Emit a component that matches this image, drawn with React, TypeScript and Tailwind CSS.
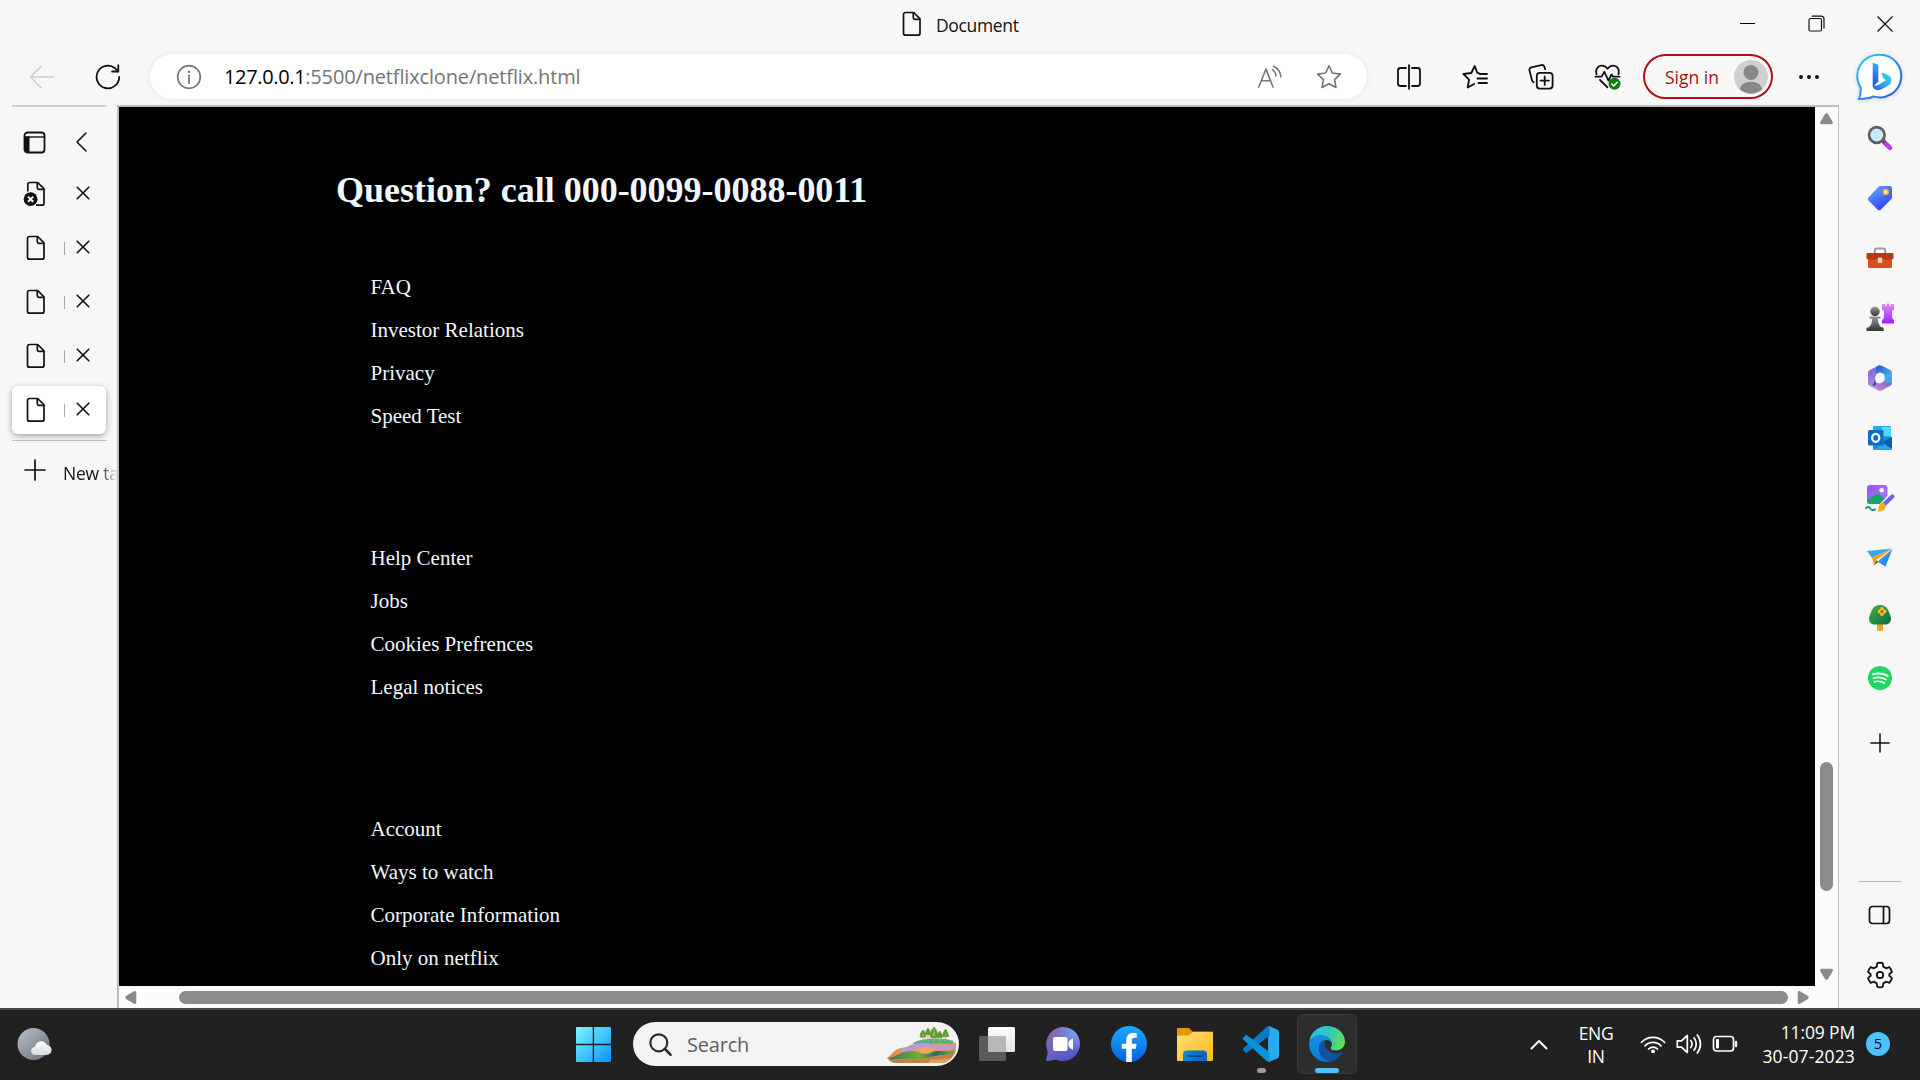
import React from "react";

type IconProps = { className?: string };

/* ---------- line icons ---------- */

const DocIcon = ({ className = "" }: IconProps) => (
  <svg className={className} width="20" height="26" viewBox="0 0 20 26" fill="none" stroke="#111" strokeWidth="1.7" strokeLinejoin="round">
    <path d="M3.5 1.5h8.2l6.3 6.3v14.4a2 2 0 0 1-2 2H3.5a2 2 0 0 1-2-2V3.500a2 2 0 0 1 2-2z" />
    <path d="M11.300 1.500v5.200a1.600 1.600 0 0 0 1.600 1.600h5.100" />
  </svg>
);

const DocErrorIcon = () => (
  <svg width="24" height="26" viewBox="0 0 24 26" fill="none" stroke="#111" strokeWidth="1.700" strokeLinejoin="round">
    <path d="M4.800 10.500V3.500a2 2 0 0 1 2-2h7.900l6.300 6.300v14.400a2 2 0 0 1-2 2h-6" />
    <path d="M14.300 1.500v5.200a1.600 1.600 0 0 0 1.600 1.600H21" />
    <circle cx="7.600" cy="18.200" r="6.900" fill="#111" stroke="none" />
    <path d="M5 15.600l5.200 5.200M10.200 15.600L5 20.800" stroke="#f7f7f7" strokeWidth="2" />
  </svg>
);

const CloseIcon = () => (
  <svg className="mb-[2px]" width="14" height="14" viewBox="0 0 14 14" stroke="#111" strokeWidth="1.600" strokeLinecap="round">
    <path d="M1.200 1.200l11.600 11.600M12.800 1.200L1.200 12.800" />
  </svg>
);

const BackIcon = () => (
  <svg width="26" height="24" viewBox="0 0 26 24" fill="none" stroke="#cdcdcd" strokeWidth="1.600" strokeLinecap="round" strokeLinejoin="round">
    <path d="M12 1.500L1.500 12 12 22.500M1.500 12H25" />
  </svg>
);

const RefreshIcon = () => (
  <svg width="26" height="26" viewBox="0 0 26 26" fill="none" stroke="#111" strokeWidth="1.800" strokeLinecap="round" strokeLinejoin="round">
    <path d="M24.200 13a11.300 11.300 0 1 1-4.200-8.800l3 2.900" />
    <path d="M23.300 1.200v6.300h-6.200" />
  </svg>
);

const InfoIcon = () => (
  <svg width="26" height="26" viewBox="0 0 26 26" fill="none" stroke="#757575" strokeWidth="1.700">
    <circle cx="13" cy="13" r="11.300" />
    <path d="M13 11.200v8" strokeLinecap="round" />
    <circle cx="13" cy="7.800" r="1.200" fill="#757575" stroke="none" />
  </svg>
);

const ReadAloudIcon = () => (
  <svg width="26" height="24" viewBox="0 0 26 24" fill="none" stroke="#757575" strokeWidth="1.600" strokeLinecap="round" strokeLinejoin="round">
    <path d="M1.800 22L9 4l7 18M4.300 15.800h9.400" />
    <path d="M15.500 4.500c2 1.600 3.200 3.800 3.400 6.500M16.500 1.300c4.300 2 7 5.600 7.300 10.500" />
  </svg>
);

const StarIcon = () => (
  <svg width="26" height="26" viewBox="0 0 26 26" fill="none" stroke="#757575" strokeWidth="1.600" strokeLinejoin="round">
    <path d="M13 1.800l3.400 7.200 7.900 1.100-5.700 5.500 1.400 7.900-7-3.800-7 3.800 1.400-7.900-5.700-5.500 7.900-1.100z" />
  </svg>
);

const SplitIcon = () => (
  <svg width="26" height="26" viewBox="0 0 26 26" fill="none" stroke="#111" strokeWidth="1.800" strokeLinecap="round">
    <path d="M10 4H4.500A2.500 2.500 0 0 0 2 6.500v13A2.500 2.500 0 0 0 4.500 22H10M16 4h5.500A2.500 2.500 0 0 1 24 6.500v13a2.500 2.500 0 0 1-2.500 2.500H16M13 1.200v23.600" />
  </svg>
);

const FavoritesIcon = () => (
  <svg width="26" height="26" viewBox="0 0 26 26" fill="none" stroke="#111" strokeWidth="1.800" strokeLinecap="round" strokeLinejoin="round">
    <path d="M17 9.200l-1.700-.3L12.700 2l-3.400 7L1.400 10l5.700 5.600-1.400 7.900 6.500-3.500" />
    <path d="M17.500 10H25M15.500 14.500H25M16.500 19H25" />
  </svg>
);

const CollectionsIcon = () => (
  <svg width="26" height="26" viewBox="0 0 26 26" fill="none" stroke="#111" strokeWidth="1.800" strokeLinecap="round" strokeLinejoin="round">
    <rect x="8.800" y="8.800" width="15.800" height="15.800" rx="3" />
    <path d="M16.700 12.500v8.400M12.500 16.700h8.400" />
    <path d="M5.600 18.300a3 3 0 0 1-1.600-2L1.500 6.500A2.600 2.600 0 0 1 3.400 3.300l10-2.200a2.600 2.600 0 0 1 3.100 1.900l.6 2.200" />
  </svg>
);

const EssentialsIcon = () => (
  <svg width="28" height="28" viewBox="0 0 28 28" fill="none" stroke="#111" strokeWidth="1.800" strokeLinecap="round" strokeLinejoin="round">
    <path d="M2.500 11.200C1.200 7 3.300 3 7.200 2.600c2.700-.3 4.900 1 6.300 3.300 1.400-2.300 3.600-3.600 6.300-3.300 3.900.4 6 4.400 4.700 8.600" />
    <path d="M1.500 13.700h6.200l2.600-4.900 4.200 8.800 3.100-6.200 1.400 2.300h6.500" />
    <path d="M6 17l7.500 7.400" />
    <circle cx="20.500" cy="20.800" r="6" fill="#107c10" stroke="none" />
    <path d="M17.800 21l1.900 1.900 3.500-3.700" stroke="#fff" strokeWidth="1.500" />
  </svg>
);

/* ---------- colour icons ---------- */

const BingIcon = () => (
  <svg width="48" height="50" viewBox="0 0 48 50" className="drop-shadow-sm">
    <defs>
      <linearGradient id="bingRing" x1="0" y1="0" x2="1" y2="1">
        <stop offset="0" stopColor="#20d5f5" />
        <stop offset=".5" stopColor="#2f8df5" />
        <stop offset="1" stopColor="#1d54dc" />
      </linearGradient>
      <linearGradient id="bingStem" x1="0" y1="0" x2="0" y2="1">
        <stop offset="0" stopColor="#34a9ff" />
        <stop offset="1" stopColor="#1c4be4" />
      </linearGradient>
      <linearGradient id="bingBowl" x1="1" y1="0" x2="0" y2="1">
        <stop offset="0" stopColor="#2fe0d2" />
        <stop offset=".5" stopColor="#3aa8f5" />
        <stop offset="1" stopColor="#2358e8" />
      </linearGradient>
    </defs>
    <path d="M24 2.800a21.300 21.300 0 1 1-6.500 41.600c-3 1.700-8 2.600-14.700 2.600 1.900-3.600 2.100-7 1.900-11.300A21.300 21.300 0 0 1 24 2.800z" fill="#fff" stroke="url(#bingRing)" strokeWidth="2" strokeLinejoin="round" />
    <path d="M16.700 10.800l5.600 2v16.500l-5.600 6z" fill="url(#bingStem)" />
    <path d="M16.700 34.300c1 4.200 6 4.800 10 2.500l6-3.600c3.400-2.200 4-7.400.2-9.800-1.800-1-4.300-2-6-2.500-1.200-.3-1.500.6-1.100 1.500l1.900 4.300 2.500 1.300-7.900 5z" fill="url(#bingBowl)" />
  </svg>
);

const SearchColor = () => (
  <svg className="mb-[1px]" width="28" height="28" viewBox="0 0 28 28">
    <path d="M17.500 17.500l6.500 6.300" stroke="#b63df0" strokeWidth="4.600" strokeLinecap="round" />
    <path d="M16 16l3 3" stroke="#555" strokeWidth="3" />
    <circle cx="10.800" cy="11" r="7.800" fill="#c7e8fc" stroke="#5f5f5f" strokeWidth="2.700" />
  </svg>
);

const TagColor = () => (
  <svg width="26" height="26" viewBox="0 0 26 26">
    <defs>
      <linearGradient id="tag" x1="0" y1="0" x2=".7" y2="1">
        <stop offset="0" stopColor="#6aaeff" />
        <stop offset="1" stopColor="#2b3ff0" />
      </linearGradient>
    </defs>
    <path d="M13.500 1H23a2 2 0 0 1 2 2v9.200a3 3 0 0 1-.9 2.100L14 24.400a2.500 2.500 0 0 1-3.500 0L1.700 15.700a2.500 2.500 0 0 1 0-3.500L11.400 1.900A3 3 0 0 1 13.500 1z" fill="url(#tag)" />
    <circle cx="18.800" cy="7" r="2.300" fill="#fff" stroke="#f9bd12" strokeWidth="1.800" />
  </svg>
);

const ToolboxColor = () => (
  <svg width="28" height="22" viewBox="0 0 28 22">
    <path d="M8.800 7V3.500a2 2 0 0 1 2-2h6.400a2 2 0 0 1 2 2V7" fill="none" stroke="#9a9a9a" strokeWidth="2" />
    <path d="M2 11h24v8.500a1.500 1.500 0 0 1-1.500 1.500h-21A1.500 1.500 0 0 1 2 19.500z" fill="#dc4f1d" />
    <path d="M1.500 6h25a1 1 0 0 1 1 1v4.500L26 12.500H2L.5 11.500V7a1 1 0 0 1 1-1z" fill="#b9390c" />
    <rect x="11.700" y="10.500" width="4.600" height="5.500" rx="1.200" fill="#d3d3d3" />
  </svg>
);

const ChessColor = () => (
  <svg width="28" height="30" viewBox="0 0 28 30">
    <defs>
      <linearGradient id="pawn" x1="0" y1="0" x2="0" y2="1">
        <stop offset="0" stopColor="#9a9a9a" />
        <stop offset="1" stopColor="#333" />
      </linearGradient>
      <linearGradient id="rook" x1="0" y1="0" x2="0" y2="1">
        <stop offset="0" stopColor="#e08bfa" />
        <stop offset="1" stopColor="#a020f8" />
      </linearGradient>
    </defs>
    <path d="M16 1h2.800v1.800h1.900V.5h2.600v2.300h1.900V1H28v5.500l-2.200 1.700.5 7 1.700 2V20.500H16v-3.300l1.700-2 .5-7L16 6.500z" fill="url(#rook)" />
    <circle cx="9" cy="8.500" r="4.700" fill="url(#pawn)" />
    <path d="M3.500 13.500h11v2.300h-2.700c.3 4 1.200 6.200 3.200 8.500h1.200a1.500 1.500 0 0 1 1.500 1.500V28H.5v-2.200A1.500 1.500 0 0 1 2 24.300h1c2-2.300 3-4.500 3.200-8.500H3.500z" fill="url(#pawn)" />
  </svg>
);

const M365Color = () => (
  <svg width="26" height="28" viewBox="0 0 26 28">
    <defs>
      <linearGradient id="mA" x1="0" y1="0" x2="0" y2="1">
        <stop offset="0" stopColor="#6f6bd8" />
        <stop offset="1" stopColor="#b381e6" />
      </linearGradient>
      <linearGradient id="mB" x1="0" y1="0" x2="1" y2=".8">
        <stop offset="0" stopColor="#2f55c4" />
        <stop offset="1" stopColor="#48c5f3" />
      </linearGradient>
      <linearGradient id="mC" x1="0" y1="1" x2="1" y2="0">
        <stop offset="0" stopColor="#cf9cf0" />
        <stop offset="1" stopColor="#7a4ba6" />
      </linearGradient>
    </defs>
    <path d="M12.500 1L2.800 6A3 3 0 0 0 1 8.700v10.500a3 3 0 0 0 1.500 2.500l6 .2.500-11.600 4-2.400z" fill="url(#mA)" />
    <path d="M9 10.300V4.500a4 4 0 0 1 5.300-3L23.300 6A3 3 0 0 1 25 8.700v10L17.500 17v-6.200L13 8.200z" fill="url(#mB)" />
    <path d="M2.500 21.700c3 .4 5.200-.5 7-3.200l3.500 1 4.500-2.700V11.500L25 18.500c0 1.500-.5 2.600-1.700 3.300l-8.700 4.700a3.500 3.500 0 0 1-3.200 0z" fill="url(#mC)" />
    <path d="M17.500 12v5l7.500 2.500V13z" fill="#3da9e8" />
    <path d="M9 17.500l-.5 3.500-3 1.200 2-4.700z" fill="#2b4a9a" />
    <circle cx="13" cy="13.900" r="4.800" fill="#f7f7f7" />
  </svg>
);

const OutlookColor = () => (
  <svg width="26" height="26" viewBox="0 0 26 26">
    <rect x="6" y="1" width="18" height="12" rx="1" fill="#28a8ea" />
    <rect x="15" y="2" width="9" height="9" fill="#50d9ff" />
    <path d="M6 12h19v11.500a1.500 1.500 0 0 1-1.500 1.500H7.500A1.500 1.500 0 0 1 6 23.500z" fill="#1490df" />
    <path d="M25 12v12L15 17z" fill="#0f5aa5" />
    <path d="M7 25l18-.5-8-6z" fill="#28a8ea" />
    <rect x="1" y="5" width="15.500" height="15.500" rx="1.500" fill="#0f6cc4" />
    <ellipse cx="8.700" cy="12.800" rx="3.600" ry="4" fill="none" stroke="#fff" strokeWidth="2.200" />
  </svg>
);

const DesignerColor = () => (
  <svg width="30" height="30" viewBox="0 0 30 30">
    <defs>
      <linearGradient id="dsg" x1="0" y1="0" x2="1" y2="1">
        <stop offset="0" stopColor="#9456e8" />
        <stop offset="1" stopColor="#b17bff" />
      </linearGradient>
    </defs>
    <path d="M5 2h14.500a3 3 0 0 1 3 3v8l-8 8H5a3 3 0 0 1-3-3V5a3 3 0 0 1 3-3z" fill="url(#dsg)" />
    <path d="M2 17l8-5.500a4 4 0 0 1 4.600 0L20 15.500l-5.500 5.500H5a3 3 0 0 1-3-2.500z" fill="#1ba36d" />
    <circle cx="16.700" cy="7.300" r="2.300" fill="#fff" />
    <path d="M28 13.500L19 22" stroke="#f7f7f7" strokeWidth="6.500" />
    <path d="M27.300 13.500L19 21.500" stroke="#6c63f0" strokeWidth="4.200" strokeLinecap="round" />
    <path d="M15.500 20c2.500-1.200 5.500.5 5 4-.4 3-4 5-8.500 4.300 2.200-1.600 1.500-6.800 3.500-8.300z" fill="#f3ad1e" />
    <path d="M1 25c2-1.500 4-1 4.500.7.500 1.500 2 1.800 4.500.8" stroke="#1f9a78" strokeWidth="2" fill="none" strokeLinecap="round" />
  </svg>
);

const PlaneColor = () => (
  <svg width="28" height="20" viewBox="0 0 28 20">
    <defs>
      <linearGradient id="pln" x1="0" y1="0" x2="1" y2="1">
        <stop offset="0" stopColor="#4fc3f7" />
        <stop offset="1" stopColor="#1c6cd6" />
      </linearGradient>
    </defs>
    <path d="M1 3l25-2.500L6 10z" fill="#38aaea" />
    <path d="M26.500 1L19.500 18.500 12 14l-4.500 3z" fill="url(#pln)" />
    <path d="M26.500.8L6 9.500l2 8L10 12z" fill="#f5a11b" />
    <path d="M8 17.500L10.300 12l1.700 2z" fill="#7a4c14" />
  </svg>
);

const TreeColor = () => (
  <svg width="24" height="28" viewBox="0 0 24 28">
    <defs>
      <linearGradient id="tree" x1="0" y1="0" x2="1" y2="1">
        <stop offset="0" stopColor="#46b04c" />
        <stop offset="1" stopColor="#0c6b3b" />
      </linearGradient>
    </defs>
    <rect x="9" y="19" width="6" height="8" rx="1" fill="#f2a51c" />
    <path d="M12 1c4.600 0 7.300 2.600 8.800 6.500 1.100 2.800 2.200 5 2.200 7.200 0 3.600-2.600 5.800-6 5.800H7c-3.500 0-6-2.200-6-5.800 0-2.300 1.200-4.500 2.300-7.200C4.800 3.600 7.500 1 12 1z" fill="url(#tree)" />
    <g fill="#fbc31c">
      <circle cx="14" cy="5" r="1.900" />
      <circle cx="14" cy="10" r="1.900" />
      <circle cx="11.500" cy="7.500" r="1.900" />
      <circle cx="16.500" cy="7.500" r="1.900" />
    </g>
    <circle cx="14" cy="7.500" r="1.500" fill="#c0510f" />
  </svg>
);

const SpotifyColor = () => (
  <svg width="24" height="24" viewBox="0 0 24 24">
    <circle cx="12" cy="12" r="12" fill="#1ed760" />
    <g fill="none" stroke="#fff" strokeLinecap="round">
      <path d="M4.800 8.300c4.800-1.400 10.200-1 14.700 1.400" strokeWidth="2.100" />
      <path d="M5.500 12.100c4-1.100 8.700-.7 12.500 1.400" strokeWidth="1.800" />
      <path d="M6 15.700c3.500-.9 7.400-.5 10.500 1.300" strokeWidth="1.500" />
    </g>
  </svg>
);

const PlusIcon = ({ className = "" }: IconProps) => (
  <svg className={className} viewBox="0 0 22 22" stroke="#111" strokeWidth="1.700" strokeLinecap="round">
    <path d="M11 1v20M1 11h20" />
  </svg>
);

const GearIcon = () => (
  <svg width="28" height="28" viewBox="0 0 28 28" fill="none" stroke="#111" strokeWidth="1.800" strokeLinejoin="round">
    <path d="M11.300 2.200Q14 1.300 16.700 2.200L17.400 5.800Q18.900 6.400 20 7.300L23.300 6.100Q25.200 8.200 26 10.900L23.300 13.200Q23.500 14 23.300 14.800L26 17.100Q25.200 19.800 23.300 21.900L20 20.700Q18.900 21.600 17.400 22.200L16.700 25.800Q14 26.700 11.300 25.800L10.600 22.200Q9.100 21.600 8 20.700L4.700 21.900Q2.800 19.800 2 17.100L4.700 14.800Q4.500 14 4.700 13.200L2 10.900Q2.800 8.200 4.700 6.100L8 7.300Q9.100 6.400 10.600 5.800Z" />
    <circle cx="14" cy="14" r="3.200" />
  </svg>
);

/* ---------- taskbar icons ---------- */

const WeatherIcon = () => (
  <svg width="36" height="34" viewBox="0 0 36 34">
    <defs>
      <linearGradient id="moon" x1="0" y1="0" x2="1" y2="1">
        <stop offset="0" stopColor="#b9c1ca" />
        <stop offset="1" stopColor="#666e78" />
      </linearGradient>
      <linearGradient id="cloud" x1="0" y1="0" x2="0" y2="1">
        <stop offset="0" stopColor="#fff" />
        <stop offset="1" stopColor="#d4dbe2" />
      </linearGradient>
    </defs>
    <circle cx="16.500" cy="17" r="16" fill="url(#moon)" />
    <path d="M18.500 28a4 4 0 0 1-.6-8c.6-3.500 3.400-5.800 6.400-5.800 2.700 0 4.500 1.500 5.400 3.900 3 .2 4.800 2.300 4.800 5 0 2.800-2.200 4.900-5 4.900z" fill="url(#cloud)" />
  </svg>
);

const StartIcon = () => (
  <svg width="35" height="35" viewBox="0 0 36 36">
    <defs>
      <linearGradient id="win" x1="0" y1="0" x2="36" y2="36" gradientUnits="userSpaceOnUse">
        <stop offset="0" stopColor="#7ff6ff" />
        <stop offset="1" stopColor="#0a93ff" />
      </linearGradient>
    </defs>
    <path d="M1 0H17.200v17.300H0V1a1 1 0 0 1 1-1zM18.600 0H35a1 1 0 0 1 1 1v16.300h-17.400zM0 18.700h17.200V36H1a1 1 0 0 1-1-1zM18.600 18.700H36V35a1 1 0 0 1-1 1h-16.400z" fill="url(#win)" />
  </svg>
);

const LandscapeIcon = () => (
  <svg width="70" height="37" viewBox="0 0 70 37">
    <defs>
      <linearGradient id="hillA" x1="0" x2="1">
        <stop offset="0" stopColor="#e28355" />
        <stop offset=".5" stopColor="#f0a36b" />
        <stop offset="1" stopColor="#e88a60" />
      </linearGradient>
      <linearGradient id="hillB" x1="0" x2="1">
        <stop offset="0" stopColor="#2a7a5e" />
        <stop offset=".45" stopColor="#7caa35" />
        <stop offset=".7" stopColor="#1f7262" />
        <stop offset="1" stopColor="#7fae3c" />
      </linearGradient>
    </defs>
    <path d="M0 31C5 28 8 21 15 21c8-1 10-6 18-6 12-4 24-2 36 1 1 9-3 20-13 20H10C5 36 2 34 0 31z" fill="url(#hillA)" />
    <path d="M26 16c9-5 27-6 41-2l-3 3c-12-2-24 0-32 2z" fill="#4fb27b" />
    <path d="M14 21c10 0 10-5 20-5s15 4 35 1v4c-16 4-22-2-32-1-9 1-12 5-23 4z" fill="#b79ad6" />
    <path d="M2 31c8-1 12-7 21-7 10-1 12 5 20 2 9-4 16 0 26-3l-1 4c-10 1-18 1-27 4-10 3-24 0-36 3z" fill="url(#hillB)" />
    <path d="M3 33c14-3 26 1 38-2 10-3 17-3 26-4-1 6-6 9-11 9H10c-3 0-5-1-7-3z" fill="#c57f45" />
    <path d="M44 32c6 2 12 0 20-1-2 3-5 5-8 5H41z" fill="#e3a166" />
    <g stroke="#e9a27c" strokeWidth="1.200">
      <path d="M36 8v6M41 7v7M47 8v6M52.500 8v6M58.500 8v6" />
    </g>
    <g fill="#5f9a32">
      <path d="M36 3l2 2.500 1 4.500h-6l1-4.500zM41 1l1.700 2.500.8 4h-5l.8-4zM47 0l2.500 3.500L51 9l-1 1.500h-6L43 9l1.500-5.500zM52.800 4l1.700 2.500.8 4h-5l.8-4zM58.500 2l1.800 3 1.500 4.500h-6.500l1.400-4.500z" stroke="#5f9a32" strokeWidth=".8" strokeLinejoin="round" />
    </g>
    <path d="M47 1l1.500 8h-3.500zM36 5l1 4.500h-2zM58.500 4l1 5h-2z" fill="#8dbd48" />
  </svg>
);

const TaskViewIcon = () => (
  <svg width="36" height="34" viewBox="0 0 36 34">
    <defs>
      <linearGradient id="tv" x1="0" y1="0" x2="0" y2="1">
        <stop offset="0" stopColor="#fff" />
        <stop offset="1" stopColor="#e2e2e2" />
      </linearGradient>
    </defs>
    <rect x="9" y="0" width="27" height="25" rx="1.500" fill="url(#tv)" />
    <rect x="0" y="9" width="27" height="25" rx="1.500" fill="#5b5b5b" />
    <path d="M9 9h16.500A1.500 1.500 0 0 1 27 10.500V25H10.500A1.500 1.500 0 0 1 9 23.500z" fill="#b9b9b9" />
  </svg>
);

const ChatIcon = () => (
  <svg width="36" height="36" viewBox="0 0 36 36">
    <defs>
      <linearGradient id="chat" x1="0" y1="0" x2=".6" y2="1">
        <stop offset="0" stopColor="#a56a9c" />
        <stop offset=".4" stopColor="#7569c0" />
        <stop offset="1" stopColor="#5257cd" />
      </linearGradient>
      <radialGradient id="chatGlow" cx=".9" cy=".15" r=".6">
        <stop offset="0" stopColor="#79a8f5" />
        <stop offset="1" stopColor="#79a8f5" stopOpacity="0" />
      </radialGradient>
    </defs>
    <path d="M18 1a17 17 0 1 1-7 32.500C7.500 35 4 35 1.500 35 .8 34 1 33 1.500 32c1-3 1.500-5 .8-8A17 17 0 0 1 18 1z" fill="url(#chat)" />
    <path d="M18 1a17 17 0 1 1-7 32.500C7.500 35 4 35 1.500 35 .8 34 1 33 1.500 32c1-3 1.500-5 .8-8A17 17 0 0 1 18 1z" fill="url(#chatGlow)" />
    <rect x="8" y="11" width="14.500" height="14" rx="2" fill="#fff" />
    <path d="M24 15.500l3.500-2.700v10.500L24 20.500z" fill="#fff" stroke="#fff" strokeLinejoin="round" />
  </svg>
);

const FacebookIcon = () => (
  <svg width="36" height="36" viewBox="0 0 36 36">
    <defs>
      <linearGradient id="fb" x1="0" y1="0" x2="0" y2="1">
        <stop offset="0" stopColor="#19aaff" />
        <stop offset="1" stopColor="#0862e0" />
      </linearGradient>
    </defs>
    <circle cx="18" cy="18" r="18" fill="url(#fb)" />
    <path d="M15.200 36V22.800H10.700V17.800h4.500v-3.600c0-4.700 2.800-7.300 6.900-7.300 1.600 0 3 .2 3.600.3v4.600h-2.300c-2 0-2.600 1-2.600 2.400v3.600h4.800l-.8 5h-4V36z" fill="#fff" />
  </svg>
);

const FolderIcon = () => (
  <svg width="36" height="33" viewBox="0 0 36 33">
    <defs>
      <linearGradient id="fold" x1="0" y1="0" x2="1" y2="1">
        <stop offset="0" stopColor="#ffe07a" />
        <stop offset="1" stopColor="#fcb90f" />
      </linearGradient>
      <linearGradient id="foldBlue" x1="0" y1="0" x2="1" y2="0">
        <stop offset="0" stopColor="#0b8ae0" />
        <stop offset="1" stopColor="#0a62b5" />
      </linearGradient>
    </defs>
    <path d="M1 0h11l3.500 3.500H35a1 1 0 0 1 1 1V9H0V1a1 1 0 0 1 1-1z" fill="#e09a05" />
    <path d="M1 7.500h10.500L16 4h19a1 1 0 0 1 1 1v27a1 1 0 0 1-1 1H1a1 1 0 0 1-1-1V8.500a1 1 0 0 1 1-1z" fill="url(#fold)" />
    <path d="M6 33v-6.500a4 4 0 0 1 4-4h16a4 4 0 0 1 4 4V33z" fill="url(#foldBlue)" />
    <path d="M11 28h14" stroke="#063f7c" strokeWidth="1.600" strokeLinecap="round" />
  </svg>
);

const VsCodeIcon = () => (
  <svg width="36" height="36" viewBox="0 0 36 36">
    <path d="M26 0L34.500 3.700A2.600 2.600 0 0 1 36 6v24a2.600 2.600 0 0 1-1.500 2.300L26 36l-.9-.5V.6z" fill="#2aa9f2" />
    <path d="M26.500 9.800L4.300 26.500a1.600 1.600 0 0 1-2 0l-1.900-1.900a1.600 1.600 0 0 1 0-2.300L23.800.7A3 3 0 0 1 26.500.2z" fill="#0a7abf" />
    <path d="M26.500 26.200L4.300 9.500a1.600 1.600 0 0 0-2 0L.4 11.400a1.600 1.600 0 0 0 0 2.300l23.400 21.600a3 3 0 0 0 2.700.5z" fill="#0b92dc" />
  </svg>
);

const EdgeIcon = () => (
  <svg width="36" height="36" viewBox="0 0 36 36">
    <defs>
      <linearGradient id="eTop" x1="0" y1=".3" x2="1" y2=".5">
        <stop offset="0" stopColor="#35b8ea" />
        <stop offset=".5" stopColor="#2fc6c4" />
        <stop offset="1" stopColor="#62e054" />
      </linearGradient>
      <linearGradient id="eMid" x1="0" y1="0" x2="0" y2="1">
        <stop offset="0" stopColor="#1594df" />
        <stop offset="1" stopColor="#0a78d4" />
      </linearGradient>
    </defs>
    <path d="M.2 16C1.200 6.800 8.800 0 18 0c10 0 18 7 18 15.600 0 5.400-4 8.800-8.800 8.800-3 0-5.600-.8-5.600-2 0-.9 1.300-1.500 1.300-4C22.900 13 18 9.500 12 9.500 6 9.500 1.600 12.500.2 16z" fill="url(#eTop)" />
    <path d="M.1 17.500C1 12.500 6 9.300 11.500 9.300c6.300 0 11 4 11.300 8.500-1-2.500-3-3.800-5.300-3.800-4 0-7.500 3.600-7.500 8.300 0 6.500 4.500 11.500 10.700 13.500A18 18 0 0 1 .1 17.500z" fill="url(#eMid)" />
    <path d="M10 22.300c0-4.300 2.700-7.300 6-8.200-1.600 8 4 13.200 10.500 13.200 2.700 0 4.700-.7 6-1.400.6-.3 1 .2.700.8C30.200 32 24.900 36 20.700 35.800 14.500 34.500 10 29 10 22.300z" fill="#12519f" />
  </svg>
);

const WifiIcon = () => (
  <svg width="26" height="20" viewBox="0 0 26 20" fill="none" stroke="#fff" strokeWidth="1.700" strokeLinecap="round">
    <path d="M1.500 8.300a16 16 0 0 1 23 0M5 11.800a11.200 11.200 0 0 1 16 0M8.500 15a6.300 6.300 0 0 1 9 0" />
    <circle cx="13" cy="17.300" r="1.900" fill="#fff" stroke="none" />
  </svg>
);

const SpeakerIcon = () => (
  <svg width="26" height="22" viewBox="0 0 26 22" fill="none" stroke="#fff" strokeWidth="1.700" strokeLinecap="round" strokeLinejoin="round">
    <path d="M1.300 7.800h4.200L11.300 2.500v17L5.500 14.200H1.300z" />
    <path d="M14.800 7.500a6 6 0 0 1 0 7M18 4.700a10 10 0 0 1 0 12.600M21.300 2a14.500 14.500 0 0 1 0 18" />
  </svg>
);

const BatteryIcon = () => (
  <svg width="26" height="18" viewBox="0 0 26 18" fill="none" stroke="#fff" strokeWidth="1.700">
    <rect x="1.500" y="1.500" width="20" height="14.500" rx="3" />
    <path d="M24 7v4" strokeWidth="2.400" strokeLinecap="round" />
    <rect x="4" y="4" width="3" height="9.500" rx=".8" fill="#fff" stroke="none" />
  </svg>
);

/* ---------- page ---------- */

const linkGroups = [
  ["FAQ", "Investor Relations", "Privacy", "Speed Test"],
  ["Help Center", "Jobs", "Cookies Prefrences", "Legal notices"],
  ["Account", "Ways to watch", "Corporate Information", "Only on netflix"],
];

const sidebarApps = [
  SearchColor,
  TagColor,
  ToolboxColor,
  ChessColor,
  M365Color,
  OutlookColor,
  DesignerColor,
  PlaneColor,
  TreeColor,
  SpotifyColor,
];

function TitleBar() {
  return (
    <header className="flex h-12 shrink-0 items-center">
      <div className="flex w-[1713px] items-center pl-[902px]">
        <DocIcon />
        <span className="ml-[14px] mt-[1px] text-[17.5px] leading-6 tracking-[-0.35px] text-[#111]">Document</span>
      </div>
      <div className="flex h-[47px] items-center self-start">
        <div className="flex w-[69px] justify-center">
          <div className="h-px w-[15px] bg-black" />
        </div>
        <div className="flex w-[69px] justify-center">
          <svg width="17" height="17" viewBox="0 0 17 17" fill="none" stroke="#111" strokeWidth="1.200">
            <rect x="1" y="3.500" width="12.500" height="12.500" rx="1.500" />
            <path d="M3.800 1.200H13a3 3 0 0 1 3 3v9.300" />
          </svg>
        </div>
        <div className="flex w-[69px] justify-center pr-[1px]">
          <svg width="16" height="16" viewBox="0 0 16 16" stroke="#111" strokeWidth="1.200">
            <path d="M.5.500l15 15M15.500.500l-15 15" />
          </svg>
        </div>
      </div>
    </header>
  );
}

function Toolbar() {
  return (
    <div className="flex h-[57px] shrink-0 items-center">
      <div className="flex w-[84px] shrink-0 justify-center">
        <BackIcon />
      </div>
      <div className="flex w-[66px] shrink-0 pl-[11px]">
        <RefreshIcon />
      </div>
      <div className="flex h-[45px] w-[1217px] shrink-0 items-center rounded-full bg-white pl-[26px] shadow-[0_0_6px_rgba(0,0,0,0.08)]">
        <InfoIcon />
        <p className="ml-[22px] flex-1 text-[20px] leading-7 tracking-[-0.15px] text-[#757575]">
          <span className="tracking-[-0.35px] text-black">127.0.0.1</span>:5500/netflixclone/netflix.html
        </p>
        <ReadAloudIcon />
        <div className="ml-[33px] mr-[25px]">
          <StarIcon />
        </div>
      </div>
      <div className="ml-[29px] flex shrink-0 items-center gap-10">
        <SplitIcon />
        <FavoritesIcon />
        <CollectionsIcon />
        <EssentialsIcon />
      </div>
      <div className="ml-[21px] flex h-[45px] w-[130px] shrink-0 items-center justify-between rounded-full border-2 border-[#b01018] pl-[20px] pr-[3px]">
        <span className="text-[17.5px] leading-6 tracking-[0px] text-[#a80f17]">Sign in</span>
        <svg width="34" height="34" viewBox="0 0 34 34">
          <defs>
            <clipPath id="avatar">
              <circle cx="17" cy="17" r="16.500" />
            </clipPath>
          </defs>
          <circle cx="17" cy="17" r="17" fill="#d2d0ce" />
          <g clipPath="url(#avatar)" fill="#8a8886">
            <circle cx="17" cy="12.500" r="7.500" />
            <path d="M5 34c0-8 4.500-12.200 12-12.200S29 26 29 34z" />
          </g>
        </svg>
      </div>
      <div className="ml-[26px] flex shrink-0 gap-1">
        <i className="size-1 rounded-full bg-[#111]" />
        <i className="size-1 rounded-full bg-[#111]" />
        <i className="size-1 rounded-full bg-[#111]" />
      </div>
    </div>
  );
}

function TabRow({ active = false, error = false }: { active?: boolean; error?: boolean }) {
  return (
    <div className="flex h-[54px] items-center">
      <div
        className={
          active
            ? "ml-3 flex h-12 w-[94px] items-center rounded-md bg-white pl-[14px] shadow-[0_2px_6px_rgba(0,0,0,0.35)]"
            : "ml-3 flex h-12 w-[94px] items-center pl-[14px]"
        }
      >
        {error ? (
          <div className="-ml-[3px] mr-[29px]">
            <DocErrorIcon />
          </div>
        ) : (
          <>
            <DocIcon />
            <div className="ml-[18px] mr-[11px] h-[13px] w-px bg-[#a8a8a8]" />
          </>
        )}
        <CloseIcon />
      </div>
    </div>
  );
}

function TabStrip() {
  return (
    <nav className="flex w-[117px] shrink-0 flex-col overflow-hidden">
      <div className="ml-3 h-[2px] w-[95px] shrink-0 bg-[#cfcfcf]" />
      <div className="flex h-[70px] shrink-0 items-center pl-[23px]">
        <svg width="23" height="23" viewBox="0 0 23 23" fill="none" stroke="#111" strokeWidth="1.800">
          <rect x="1.500" y="1.500" width="20" height="20" rx="3" />
          <path d="M2 6h19" strokeWidth="1.400" />
          <path d="M1.500 5.500H6.500V21.500H4a2.500 2.500 0 0 1-2.500-2.500z" fill="#111" stroke="none" />
        </svg>
        <svg className="ml-[30px]" width="11" height="20" viewBox="0 0 11 20" fill="none" stroke="#111" strokeWidth="1.600" strokeLinecap="round" strokeLinejoin="round">
          <path d="M10 1L1 10l9 9" />
        </svg>
      </div>
      <div className="-mt-[10px]">
        <TabRow error />
        <TabRow />
        <TabRow />
        <TabRow />
        <TabRow active />
      </div>
      <div className="ml-3 mt-[3px] h-px w-[95px] shrink-0 bg-[#bdbdbd]" />
      <div className="flex h-[58px] items-center pl-[24px]">
        <PlusIcon className="size-[22px] shrink-0" />
        <span className="ml-[17px] mt-[5px] w-[54px] overflow-hidden whitespace-nowrap bg-gradient-to-r from-[#111] from-65% to-[#f0f0f0] bg-clip-text text-[17.5px] leading-6 tracking-[-0.2px] text-transparent">
          New tab
        </span>
      </div>
    </nav>
  );
}

function PageView() {
  return (
    <section className="flex w-[1722px] flex-col border-l-2 border-r border-t-2 border-[#bdbdbd]">
      <div className="flex h-[879px]">
        <main className="w-[1696px] overflow-hidden bg-black pl-[217px] font-['Liberation_Serif',serif] text-[#f0f8ff]">
          <h1 className="mt-[62px] text-[36px] font-bold leading-[42px] tracking-[-0.02px]">Question? call 000-0099-0088-0011</h1>
          <div className="pl-[34.500px] pt-[55px]">
            {linkGroups.map((group) => (
              <ul key={group[0]} className="mb-[99px]">
                {group.map((label) => (
                  <li key={label} className="h-[43px] text-[21px] leading-[43px]">
                    {label}
                  </li>
                ))}
              </ul>
            ))}
          </div>
        </main>
        <div className="flex w-[23px] flex-col items-center bg-[#fcfcfc]">
          <svg className="mt-[6px]" width="15" height="12" viewBox="0 0 15 12">
            <path d="M5.800 1.300a2 2 0 0 1 3.400 0l4.500 7.700a1.500 1.500 0 0 1-1.300 2.300H2.600A1.500 1.500 0 0 1 1.300 9z" fill="#8b8b8b" />
          </svg>
          <div className="mt-[637px] h-[129px] w-[13px] rounded-full bg-[#8b8b8b]" />
          <svg className="mt-[77px] rotate-180" width="15" height="12" viewBox="0 0 15 12">
            <path d="M5.800 1.300a2 2 0 0 1 3.400 0l4.500 7.700a1.500 1.500 0 0 1-1.300 2.300H2.600A1.500 1.500 0 0 1 1.300 9z" fill="#8b8b8b" />
          </svg>
        </div>
      </div>
      <div className="flex h-[22px] items-center bg-[#fcfcfc] pl-[6px] pt-[1px]">
        <svg width="12" height="15" viewBox="0 0 12 15">
          <path d="M1.300 5.800a2 2 0 0 0 0 3.400L9 13.700a1.500 1.500 0 0 0 2.300-1.300V2.600A1.500 1.500 0 0 0 9 1.300z" fill="#8b8b8b" />
        </svg>
        <div className="ml-[42px] h-[13px] w-[1609px] rounded-full bg-[#8b8b8b]" />
        <svg className="ml-[9px] rotate-180" width="12" height="15" viewBox="0 0 12 15">
          <path d="M1.300 5.800a2 2 0 0 0 0 3.400L9 13.700a1.500 1.500 0 0 0 2.300-1.300V2.600A1.500 1.500 0 0 0 9 1.300z" fill="#8b8b8b" />
        </svg>
      </div>
    </section>
  );
}

function AppSidebar() {
  return (
    <aside className="flex w-[81px] flex-col items-center">
      <div className="flex h-[57px] items-center">
        <BingIcon />
      </div>
      <div className="h-[3px]" />
      {sidebarApps.map((Icon, i) => (
        <div key={i} className="flex h-[60px] items-center">
          <Icon />
        </div>
      ))}
      <div className="flex h-[70px] items-center">
        <PlusIcon className="size-[20px]" />
      </div>
      <div className="mt-[103px] h-px w-[42px] bg-[#bdbdbd]" />
      <div className="flex h-[66px] items-center">
        <svg width="23" height="20" viewBox="0 0 23 20" fill="none" stroke="#111" strokeWidth="1.700">
          <rect x="1.500" y="1.500" width="20" height="17" rx="3" />
          <path d="M15.500 2v16" />
        </svg>
      </div>
      <div className="flex h-[54px] items-center">
        <GearIcon />
      </div>
    </aside>
  );
}

function Taskbar() {
  return (
    <footer className="flex h-[72px] shrink-0 items-center border-t-2 border-[#474747] bg-[#212121] pb-[2px] text-white">
      <div className="flex w-[576px] pl-[17px]">
        <WeatherIcon />
      </div>
      <StartIcon />
      <div className="ml-[22px] flex h-11 w-[326px] items-center rounded-full bg-[#f3f3f3] pl-4">
        <svg width="23" height="23" viewBox="0 0 23 23" fill="none" stroke="#2b2b2b" strokeWidth="2.200" strokeLinecap="round">
          <circle cx="9.800" cy="9.800" r="8.500" />
          <path d="M16 16l5.500 5.700" strokeWidth="2.600" />
        </svg>
        <span className="ml-[15px] flex-1 pt-px text-[20px] leading-7 tracking-[-0.2px] text-[#606060]">Search</span>
        <div className="mr-[2px] overflow-hidden rounded-r-full pt-[3px]">
          <LandscapeIcon />
        </div>
      </div>
      <div className="ml-[20px] flex items-center gap-[30px]">
        <TaskViewIcon />
        <ChatIcon />
        <FacebookIcon />
        <FolderIcon />
      </div>
      <div className="ml-[18px] flex h-[60px] w-[60px] flex-col items-center pt-3">
        <VsCodeIcon />
        <div className="mt-[6px] h-[5px] w-[9px] rounded-full bg-[#9a9a9a]" />
      </div>
      <div className="ml-[6px] flex h-[60px] w-[60px] flex-col items-center rounded-md border border-[#383838] bg-[#2d2d2d] pt-[11px]">
        <EdgeIcon />
        <div className="mt-[6px] h-[5px] w-6 rounded-full bg-[#4cc2ff]" />
      </div>
      <svg className="ml-[173px]" width="18" height="11" viewBox="0 0 18 11" fill="none" stroke="#fff" strokeWidth="2" strokeLinecap="round" strokeLinejoin="round">
        <path d="M1.500 9.500L9 2l7.500 7.500" />
      </svg>
      <div className="ml-[18px] w-[60px] pt-px text-center text-[17.500px] leading-[23px] tracking-[-0.3px]">
        <p>ENG</p>
        <p>IN</p>
      </div>
      <div className="ml-[14px] flex items-center gap-[10px]">
        <WifiIcon />
        <SpeakerIcon />
        <BatteryIcon />
      </div>
      <div className="w-[117px] text-right text-[17.500px] leading-6">
        <p className="tracking-[-0.150px]">11:09 PM</p>
        <p className="tracking-[0.120px]">30-07-2023</p>
      </div>
      <div className="ml-[11px] flex size-6 items-center justify-center rounded-full bg-[#4cc2ff] text-[14.500px] text-black">5</div>
    </footer>
  );
}

export default function App() {
  return (
    <div className="flex h-[1080px] w-[1920px] flex-col overflow-hidden bg-[#f7f7f7] font-['Open_Sans','Noto_Sans',sans-serif]">
      <TitleBar />
      <div className="flex h-[960px] shrink-0">
        <div className="flex w-[1839px] shrink-0 flex-col">
          <Toolbar />
          <div className="flex h-[903px]">
            <TabStrip />
            <PageView />
          </div>
        </div>
        <AppSidebar />
      </div>
      <Taskbar />
    </div>
  );
}
